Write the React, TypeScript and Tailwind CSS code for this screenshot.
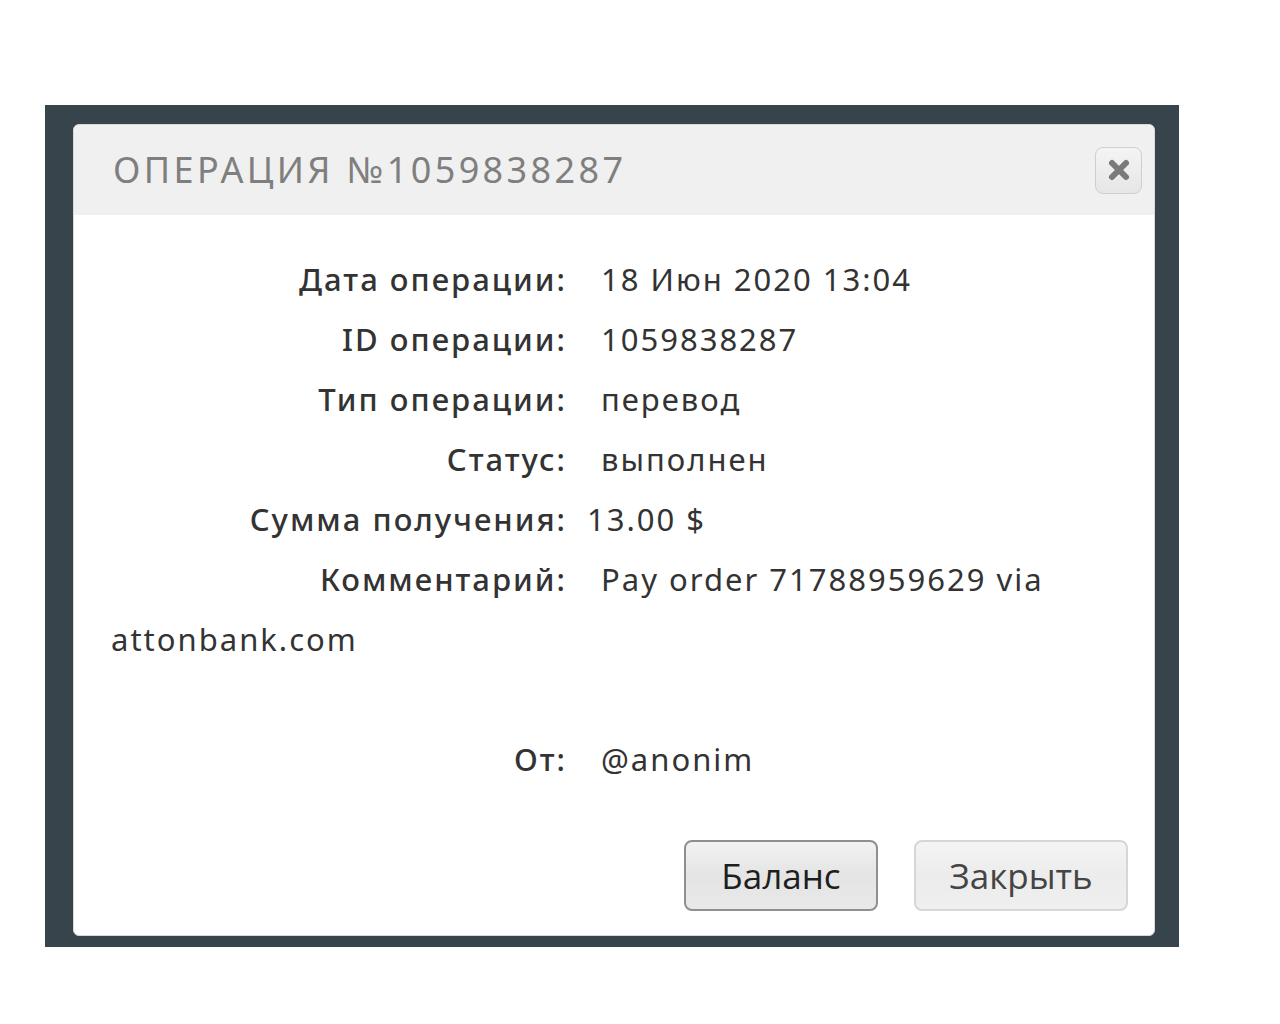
import React from 'react';

const rows: { label: string; value: React.ReactNode; gap?: string }[] = [
  { label: 'Дата операции:', value: '18 Июн 2020 13:04' },
  { label: 'ID операции:', value: '1059838287' },
  { label: 'Тип операции:', value: 'перевод' },
  { label: 'Статус:', value: 'выполнен' },
  { label: 'Сумма получения:', value: '13.00 $', gap: 'ml-[20px]' },
];

export default function App() {
  return (
    <div className="min-h-[1024px] bg-white pt-[105px] pl-[45px]" style={{ fontFamily: '"Noto Sans", "Open Sans", sans-serif' }}>
      {/* Backdrop */}
      <div className="w-[1134px] h-[842px] bg-[#37444c] pt-[19px] pl-[28px]">
        {/* Modal */}
        <div className="w-[1082px] h-[812px] bg-white rounded-[6px] border border-[#d8d8d8] overflow-hidden flex flex-col">
          {/* Header */}
          <div className="h-[90px] bg-[#f0f0f0] flex items-center justify-between pl-[39px] pr-[12px]">
            <h1 className="text-[36px] tracking-[3.4px] text-[#7f7f7f] font-normal leading-none">
              ОПЕРАЦИЯ №1059838287
            </h1>
            <button className="w-[47px] h-[47px] rounded-[8px] border border-[#cfcfcf] bg-gradient-to-b from-[#f4f4f4] to-[#e6e6e6] flex items-center justify-center">
              <svg width="24" height="24" viewBox="0 0 24 24">
                <path d="M5 5 L19 19 M19 5 L5 19" stroke="#7a7a7a" strokeWidth="6" strokeLinecap="round" />
              </svg>
            </button>
          </div>

          {/* Body */}
          <div className="flex-1 pl-[37px] pr-[37px] pt-[34px] text-[31px] tracking-[2px] text-[#333] leading-[60px]">
            {rows.map((r) => (
              <div key={r.label}>
                <span className="inline-block w-[456px] text-right font-medium">{r.label}</span>
                <span className={r.gap ?? 'ml-[34px]'}>{r.value}</span>
              </div>
            ))}
            <div>
              <span className="inline-block w-[456px] text-right font-medium">Комментарий:</span>
              <span className="ml-[34px]">Pay order 71788959629 via</span>
              <br />
              attonbank.com
            </div>
            <div className="h-[60px]" />
            <div>
              <span className="inline-block w-[456px] text-right font-medium">От:</span>
              <span className="ml-[34px]">@anonim</span>
            </div>

            <div className="flex justify-end gap-[36px] mt-[51px] mr-[-11px] tracking-normal" style={{ fontFamily: '"Open Sans", "Noto Sans", sans-serif' }}>
              <button className="w-[194px] h-[71px] rounded-[8px] border-2 border-[#8f8f8f] bg-gradient-to-b from-[#f2f2f2] via-[#e4e4e4] to-[#e9e9e9] text-[35px] text-[#1e1e1e] leading-none">
                Баланс
              </button>
              <button className="w-[214px] h-[71px] rounded-[8px] border-2 border-[#d6d6d6] bg-gradient-to-b from-[#f4f4f4] via-[#ececec] to-[#efefef] text-[35px] text-[#444] leading-none">
                Закрыть
              </button>
            </div>
          </div>
        </div>
      </div>
    </div>
  );
}
